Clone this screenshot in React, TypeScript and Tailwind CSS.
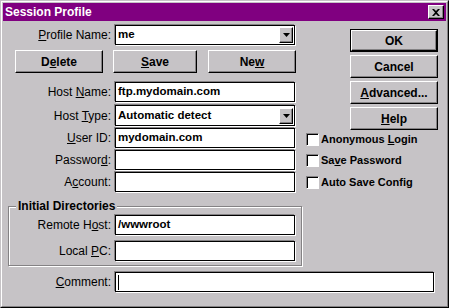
import type { ReactNode } from "react";

const raised =
  "bg-[#c6c3c6] border border-t-white border-l-white border-r-black border-b-black shadow-[inset_-1px_-1px_0_#848284]";
const sunken =
  "bg-white border border-black shadow-[1px_1px_0_white,-1px_-1px_0_#848284]";

function Btn({ children, className = "" }: { children: ReactNode; className?: string }) {
  return (
    <div className={`${raised} h-[23px] flex items-center justify-center text-[12px] font-bold text-black ${className}`}>
      <span className="leading-none">{children}</span>
    </div>
  );
}

function Box({ value, combo, className = "w-[180px]" }: { value?: string; combo?: boolean; className?: string }) {
  return (
    <div className={`${sunken} h-[20px] flex items-center ${className}`}>
      <span className="flex-1 pl-[2px] text-[11.5px] font-bold text-black leading-none">{value}</span>
      {combo && (
        <div className={`${raised} w-[14px] h-[16px] mr-[1px] flex items-center justify-center`}>
          <svg width="7" height="4" viewBox="0 0 7 4">
            <path d="M0 0h7L3.5 4z" fill="black" />
          </svg>
        </div>
      )}
    </div>
  );
}

function Row({ label, children, lw = "w-[107px]", className = "" }: { label: ReactNode; children: ReactNode; lw?: string; className?: string }) {
  return (
    <div className={`flex items-center ${className}`}>
      <div className={`${lw} text-right text-[12px] text-black pr-[4px] leading-none`}>{label}</div>
      {children}
    </div>
  );
}

function Check({ children, className = "" }: { children: ReactNode; className?: string }) {
  return (
    <div className={`flex items-center h-[13px] ${className}`}>
      <div className="w-[13px] h-[13px] bg-white border border-t-[#848284] border-l-[#848284] border-r-white border-b-white shadow-[inset_1px_1px_0_black]" />
      <span className="ml-[2px] text-[11px] font-bold text-black leading-none">{children}</span>
    </div>
  );
}

export default function App() {
  return (
    <div className="w-[449px] h-[308px] bg-[#c6c3c6] border border-t-[#c6c3c6] border-l-[#c6c3c6] border-r-black border-b-black font-['Liberation_Sans',Arial,sans-serif]">
      <div className="h-full border border-t-white border-l-white border-r-[#848284] border-b-[#848284] p-px">
        {/* title bar */}
        <div className="h-[18px] bg-[#800080] flex items-center pl-[2px] pr-[2px]">
          <span className="flex-1 text-white text-[12px] font-bold leading-none">Session Profile</span>
          <div className={`${raised} w-[16px] h-[14px] flex items-center justify-center`}>
            <svg width="8" height="7" viewBox="0 0 8 7">
              <path d="M0 0h2l2 2 2-2h2L5 3.5 8 7H6L4 5 2 7H0l3-3.5z" fill="black" />
            </svg>
          </div>
        </div>

        <div className="flex">
          {/* left column */}
          <div className="ml-[5px] w-[294px]">
            <Row label={<><u>P</u>rofile Name:</>} className="mt-[4px]">
              <Box value="me" combo />
            </Row>
            <div className="flex mt-[5px] pl-[7px]">
              <Btn className="w-[88px]">D<u>e</u>lete</Btn>
              <Btn className="w-[84px] ml-[10px]"><u>S</u>ave</Btn>
              <Btn className="w-[88px] ml-[11px]">Ne<u>w</u></Btn>
            </div>
            <Row label={<>Host <u>N</u>ame:</>} className="mt-[9px]">
              <Box value="ftp.mydomain.com" />
            </Row>
            <Row label={<>Host <u>T</u>ype:</>} className="mt-[3px]">
              <Box value="Automatic detect" combo className="w-[180px] !h-[21px]" />
            </Row>
            <Row label={<><u>U</u>ser ID:</>} className="mt-[2px]">
              <Box value="mydomain.com" />
            </Row>
            <Row label={<>Passwor<u>d</u>:</>} className="mt-[2px]">
              <Box />
            </Row>
            <Row label={<>A<u>c</u>count:</>} className="mt-[2px]">
              <Box />
            </Row>

            <div className="relative mt-[14px] h-[60px] border border-[#848284] shadow-[inset_1px_1px_0_white,1px_1px_0_white] pt-[8px]">
              <span className="absolute -top-[7px] left-[7px] px-[2px] bg-[#c6c3c6] text-[12px] font-bold text-black leading-none">
                Initial Directories
              </span>
              <Row label={<>Remote H<u>o</u>st:</>} lw="w-[106px]">
                <Box value="/wwwroot" />
              </Row>
              <Row label={<>Local <u>P</u>C:</>} lw="w-[106px]" className="mt-[6px]">
                <Box />
              </Row>
            </div>
          </div>

          {/* right column */}
          <div className="ml-[4px] flex flex-col">
            <div className="ml-[44px] mt-[8px] w-[88px] h-[23px] border border-black">
              <Btn className="w-full !h-full">OK</Btn>
            </div>
            <Btn className="ml-[44px] mt-[3px] w-[88px]">Cancel</Btn>
            <Btn className="ml-[44px] mt-[3px] w-[88px]"><u>A</u>dvanced...</Btn>
            <Btn className="ml-[44px] mt-[3px] w-[88px]"><u>H</u>elp</Btn>
            <Check className="mt-[3px]">Anonymous <u>L</u>ogin</Check>
            <Check className="mt-[8px]">Sa<u>v</u>e Password</Check>
            <Check className="mt-[9px]">Auto Save Config</Check>
          </div>
        </div>

        <Row label={<><u>C</u>omment:</>} className="mt-[6px] ml-[5px]">
          <div className={`${sunken} h-[20px] w-[319px] flex items-center pl-[2px]`}>
            <span className="w-px h-[15px] bg-black" />
          </div>
        </Row>
      </div>
    </div>
  );
}
